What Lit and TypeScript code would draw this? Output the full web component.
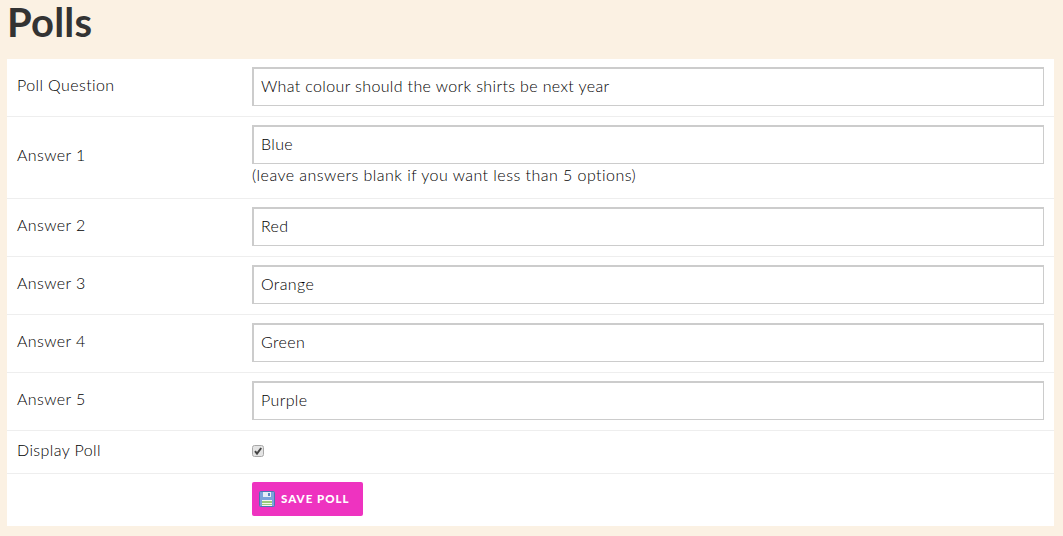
import { LitElement, html, css } from 'lit';
import { customElement } from 'lit/decorators.js';

const answers = ['Blue', 'Red', 'Orange', 'Green', 'Purple'];

@customElement('app-root')
export class AppRoot extends LitElement {
  static styles = css`
    :host {
      display: block;
      min-height: 536px;
      background: #fbf1e3;
      padding: 0 9px 10px 7px;
      box-sizing: border-box;
      font-family: Lato, sans-serif;
      font-weight: 300;
      color: #000;
    }
    h1 {
      margin: 0;
      height: 59px;
      font-size: 40px;
      line-height: 45px;
      font-weight: 700;
      color: #333;
      letter-spacing: 0.2px;
    }
    .panel {
      background: #fff;
    }
    .row {
      display: grid;
      grid-template-columns: 235px 1fr;
      align-items: center;
      padding: 8px 10px 10px;
      border-bottom: 1px solid #eee;
    }
    .row:last-child {
      border-bottom: 0;
    }
    label {
      font-size: 16px;
      letter-spacing: 0.4px;
      padding-bottom: 4px;
    }
    input[type='text'] {
      display: block;
      width: 100%;
      height: 39px;
      box-sizing: border-box;
      border-style: solid;
      border-width: 2px 1px 1px 2px;
      border-color: #ccc;
      padding: 0 7px 4px;
      font: inherit;
      font-size: 16px;
      letter-spacing: 0.36px;
      color: #000;
      background: #fff;
      outline: none;
    }
    .note {
      font-size: 16px;
      line-height: 22px;
      letter-spacing: 0.46px;
      margin-bottom: 2px;
    }
    .check {
      padding: 9px 10px;
    }
    .check label {
      line-height: 20px;
    }
    .box {
      display: block;
      width: 12px;
      height: 12px;
      margin-bottom: 2px;
    }
    button {
      display: inline-flex;
      align-items: center;
      gap: 6px;
      height: 34px;
      width: 111px;
      box-sizing: border-box;
      border: 0;
      border-radius: 2px;
      padding: 0 7px 1px;
      background: #ee33c0;
      color: #fff;
      font-family: Lato, sans-serif;
      font-size: 11.5px;
      font-weight: 900;
      letter-spacing: 1px;
      white-space: nowrap;
    }
    button svg {
      flex: none;
    }
  `;

  render() {
    return html`
      <h1>Polls</h1>
      <div class="panel">
        <div class="row">
          <label>Poll Question</label>
          <input type="text" value="What colour should the work shirts be next year" />
        </div>
        ${answers.map(
          (a, i) => html`
            <div class="row">
              <label>Answer ${i + 1}</label>
              <div>
                <input type="text" value=${a} />
                ${i === 0
                  ? html`<div class="note">(leave answers blank if you want less than 5 options)</div>`
                  : ''}
              </div>
            </div>
          `
        )}
        <div class="row check">
          <label>Display Poll</label>
          <svg class="box" viewBox="0 0 12 12">
            <rect x="0.5" y="0.5" width="11" height="11" rx="2" fill="#e4e4e4" stroke="#a8a8a8" />
            <path d="M3 6.2 L5 8.6 L9.2 3" fill="none" stroke="#444" stroke-width="2" />
          </svg>
        </div>
        <div class="row">
          <span></span>
          <div>
            <button>
              <svg width="16" height="16" viewBox="0 0 16 16">
                <rect x="0.5" y="0.5" width="15" height="15" rx="1" fill="#7ba3dc" stroke="#4a76b4" />
                <rect x="4" y="1" width="8" height="5" fill="#e6edf7" />
                <rect x="9" y="2" width="2" height="3" fill="#5a86c2" />
                <rect x="3" y="9" width="10" height="6" fill="#f4f7ee" />
                <rect x="3" y="10" width="10" height="2" fill="#9ccb7a" />
                <rect x="3" y="13" width="10" height="1" fill="#9ccb7a" />
              </svg>
              SAVE POLL
            </button>
          </div>
        </div>
      </div>
    `;
  }
}
